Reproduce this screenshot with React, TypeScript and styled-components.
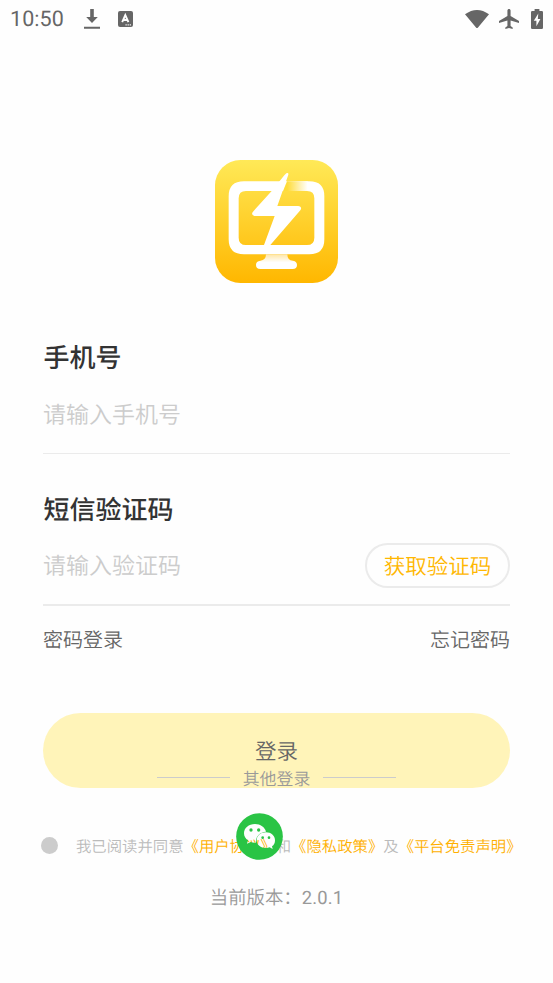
import React from 'react';
import styled, { createGlobalStyle } from 'styled-components';

const GlobalStyle = createGlobalStyle`
  * { box-sizing: border-box; }
  html, body { margin: 0; background: #fefefe; }
  body {
    font-family: "Noto Sans CJK SC", sans-serif;
    font-weight: 350;
    text-rendering: geometricPrecision;
    overflow: hidden;
  }
  button, input { font: inherit; text-rendering: inherit; padding: 0; border: 0; background: none; }
`;

const Screen = styled.div`
  width: 553px;
  height: 983px;
  background: #fefefe;
  overflow: hidden;
`;

const StatusBar = styled.header`
  height: 38px;
  display: flex;
  align-items: center;
  justify-content: space-between;
  padding: 0 10px 0 10px;
  color: #666;
`;

const StatusGroup = styled.div<{ $gap: number }>`
  display: flex;
  align-items: center;
  gap: ${(p) => p.$gap}px;
  svg { display: block; }
`;

const Clock = styled.span`
  width: 54px;
  height: 38px;
  font: 400 21.5px/40px Roboto, sans-serif;
  letter-spacing: 0.05px;
  margin-right: 2px;
  white-space: nowrap;
`;

const Plane = styled.svg`
  margin-right: 2px;
`;

const Logo = styled.svg`
  display: block;
  width: 123px;
  height: 123px;
  margin: 122px auto 0 215px;
`;

const Form = styled.main`
  margin: 0 43px;
  display: flex;
  flex-direction: column;
`;

const Field = styled.section<{ $top: number; $line: number; $height: number }>`
  display: flex;
  flex-direction: column;
  justify-content: space-between;
  margin-top: ${(p) => p.$top}px;
  height: ${(p) => p.$height}px;
  padding-bottom: 16px;
  border-bottom: ${(p) => p.$line}px solid #ebebeb;
`;

const Label = styled.label`
  display: block;
  padding-left: 0.5px;
  font-size: 26px;
  font-weight: 500;
  line-height: 42px;
  color: #333;
`;

const InputRow = styled.div`
  display: flex;
  align-items: center;
  justify-content: space-between;
  height: 45px;
`;

const Input = styled.input`
  width: 250px;
  height: 45px;
  padding-bottom: 3px;
  font-size: 23px;
  color: #333;
  outline: none;
  &::placeholder { color: #ccc; opacity: 1; }
`;

const CodeButton = styled.button`
  width: 145px;
  height: 45px;
  flex: none;
  border: 2px solid #ebebeb;
  border-radius: 23px;
  color: #ffb700;
  font-size: 21.5px;
  line-height: 39px;
`;

const Links = styled.nav`
  display: flex;
  justify-content: space-between;
  margin-top: 17px;
  font-size: 20px;
  line-height: 32px;
  color: #666;
`;

const LoginArea = styled.div`
  position: relative;
  margin-top: 58px;
`;

const LoginButton = styled.button`
  display: block;
  width: 467px;
  height: 75px;
  border-radius: 38px;
  background: #fff4b9;
  color: #666;
  font-size: 21.5px;
  line-height: 73px;
`;

const OtherLogin = styled.div`
  position: absolute;
  left: 0;
  right: 0;
  top: 51px;
  display: flex;
  flex-direction: column;
  align-items: center;
`;

const OtherTitle = styled.div`
  display: flex;
  align-items: center;
  gap: 13px;
  height: 26px;
  font-size: 16.9px;
  line-height: 26px;
  color: #999;
  span { padding-top: 1px; }
  &::before, &::after {
    content: "";
    width: 73px;
    height: 1px;
    background: #ccc;
  }
`;

const WechatIcon = styled.svg`
  width: 47px;
  height: 47px;
  margin: 23px 34px 0 0;
`;

const Agreement = styled.div`
  display: flex;
  align-items: center;
  height: 24px;
  margin: 45px 0 0 41px;
  font-size: 15.36px;
  line-height: 26px;
  color: #bbb;
  white-space: nowrap;
`;

const Radio = styled.span`
  width: 17px;
  height: 17px;
  margin-right: 18px;
  border-radius: 50%;
  background: #ccc;
`;

const AgreementText = styled.span`
  padding-top: 2px;
`;

const PolicyLink = styled.a`
  color: #ffb000;
`;

const Version = styled.footer`
  margin-top: 25px;
  text-align: center;
  font-size: 18.4px;
  line-height: 30px;
  color: #999;
  span { font-family: Roboto, sans-serif; font-weight: 400; letter-spacing: 0.15px; }
`;

function DownloadIcon() {
  return (
    <svg width="16" height="22" viewBox="0 0 16 22" fill="currentColor">
      <path d="M6.2 1h3.6v8h4L8 15 2.2 9h4zM0 18.8h16v2H0z" />
    </svg>
  );
}

function KeyboardIcon() {
  return (
    <svg width="15" height="16" viewBox="0 0 15 16">
      <rect width="15" height="16" rx="2" fill="#666" />
      <path d="M4.2 11.2 7.3 4.2l3.1 7M5.4 9h3.8" fill="none" stroke="#fff" strokeWidth="1.9" />
      <path d="M7.5 13.3h1.2v1.1H7.5zm2.1 0h1.2v1.1H9.6zm2.1 0h1.2v1.1h-1.2z" fill="#fff" />
    </svg>
  );
}

function WifiIcon() {
  return (
    <svg width="24" height="19" viewBox="0 0 24 19" fill="currentColor">
      <path d="M0 4.3Q12-4.3 24 4.3L13 17.5Q12 18.7 11 17.5z" />
    </svg>
  );
}

function PlaneIcon() {
  return (
    <Plane width="20" height="20" viewBox="2 2 19 20" preserveAspectRatio="none" fill="currentColor">
      <path d="M21 16v-2l-8-5V3.5C13 2.67 12.33 2 11.5 2S10 2.67 10 3.5V9l-8 5v2l8-2.5V19l-2 1.5V22l3.5-1 3.5 1v-1.5L13 19v-5.5l8 2.5z" />
    </Plane>
  );
}

function BatteryIcon() {
  return (
    <svg width="12" height="20" viewBox="0 0 12 20">
      <path d="M1.2 2H3.6V0h4.8v2h2.4Q12 2 12 3.2v15.6Q12 20 10.8 20H1.2Q0 20 0 18.8V3.2Q0 2 1.2 2z" fill="#666" />
      <path d="M7.3 4.5 2.8 11.7h2.6v5.5l4-7.2H6.8z" fill="#fff" />
    </svg>
  );
}

function AppLogo() {
  return (
    <Logo viewBox="30 30 369 369">
      <defs>
        <linearGradient id="tile" x1="0" y1="0" x2="0" y2="1">
          <stop offset="0" stopColor="#ffe957" />
          <stop offset="1" stopColor="#ffb700" />
        </linearGradient>
        <linearGradient id="corner" gradientUnits="userSpaceOnUse" x1="240" y1="0" x2="308" y2="0">
          <stop offset="0.1" stopColor="#ffdc39" />
          <stop offset="1" stopColor="#fff" />
        </linearGradient>
        <linearGradient id="stand" x1="0" y1="0" x2="0" y2="1">
          <stop offset="0" stopColor="#ffe6a5" />
          <stop offset="0.55" stopColor="#fff" />
        </linearGradient>
      </defs>
      <rect x="30" y="30" width="369" height="369" rx="76" fill="url(#tile)" />
      <path
        d="M117 94H313Q358 94 358 139V268Q358 313 313 313H117Q71 313 71 268V139Q71 94 117 94ZM123 123Q101 123 101 145V263Q101 285 123 285H306Q328 285 328 263V145Q328 123 306 123Z"
        fill="#fff"
        fillRule="evenodd"
      />
      <path d="M246 94H308V123H234Z" fill="url(#corner)" />
      <path
        d="M244 70Q251 66 250 74L217 168H279Q293 170 286 181L196 285H177L209 198H148Q137 194 144 185L200 123L238 76Z"
        fill="#fff"
      />
      <path
        d="M183 313H247Q247 332 264 332Q276 334 276 345Q276 357 263 357H166Q153 357 153 345Q153 333 166 332Q183 330 183 313Z"
        fill="url(#stand)"
      />
    </Logo>
  );
}

function Wechat() {
  return (
    <WechatIcon viewBox="0 0 141 141">
      <defs>
        <mask id="bubbles">
          <rect width="141" height="141" fill="#fff" />
          <path
            d="M57 33C38 33 24 45 24 61C24 71 29 77 36 82L33 92L44 87Q51 90 60 89C58 71 71 57 90 56C87 43 73 33 57 33Z"
            fill="#000"
          />
          <path
            d="M90 58C74 58 62 68 62 82C62 96 74 105 90 105Q96 105 101 103L110 108L108 100C114 96 117 90 117 82C117 68 105 58 90 58Z"
            fill="#000"
          />
          <g fill="#fff">
            <circle cx="45" cy="51" r="5" />
            <circle cx="68" cy="51" r="5" />
            <circle cx="80" cy="74" r="4" />
            <circle cx="99" cy="74" r="4" />
          </g>
        </mask>
      </defs>
      <circle cx="70.5" cy="70.5" r="70" fill="#2ac445" mask="url(#bubbles)" />
    </WechatIcon>
  );
}

export default function App() {
  return (
    <Screen lang="zh-CN">
      <GlobalStyle />
      <StatusBar>
        <StatusGroup $gap={18}>
          <Clock>10:50</Clock>
          <DownloadIcon />
          <KeyboardIcon />
        </StatusGroup>
        <StatusGroup $gap={10}>
          <WifiIcon />
          <PlaneIcon />
          <BatteryIcon />
        </StatusGroup>
      </StatusBar>
      <AppLogo />
      <Form>
        <Field $top={53} $line={1} $height={118}>
          <Label htmlFor="phone">手机号</Label>
          <InputRow>
            <Input id="phone" placeholder="请输入手机号" />
          </InputRow>
        </Field>
        <Field $top={34} $line={2} $height={118}>
          <Label htmlFor="code">短信验证码</Label>
          <InputRow>
            <Input id="code" placeholder="请输入验证码" />
            <CodeButton>获取验证码</CodeButton>
          </InputRow>
        </Field>
        <Links>
          <span>密码登录</span>
          <span>忘记密码</span>
        </Links>
        <LoginArea>
          <LoginButton>登录</LoginButton>
          <OtherLogin>
            <OtherTitle><span>其他登录</span></OtherTitle>
            <Wechat />
          </OtherLogin>
        </LoginArea>
      </Form>
      <Agreement>
        <Radio />
        <AgreementText>
          我已阅读并同意
          <PolicyLink>《用户协议》</PolicyLink>
          和
          <PolicyLink>《隐私政策》</PolicyLink>
          及
          <PolicyLink>《平台免责声明》</PolicyLink>
        </AgreementText>
      </Agreement>
      <Version>
        当前版本：<span>2.0.1</span>
      </Version>
    </Screen>
  );
}
